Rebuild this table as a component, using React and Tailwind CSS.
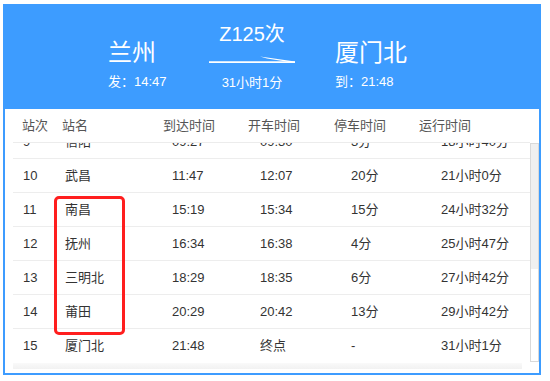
const rows = [
  ["9", "信阳", "09:27", "09:30", "3分", "18小时40分"],
  ["10", "武昌", "11:47", "12:07", "20分", "21小时0分"],
  ["11", "南昌", "15:19", "15:34", "15分", "24小时32分"],
  ["12", "抚州", "16:34", "16:38", "4分", "25小时47分"],
  ["13", "三明北", "18:29", "18:35", "6分", "27小时42分"],
  ["14", "莆田", "20:29", "20:42", "13分", "29小时42分"],
  ["15", "厦门北", "21:48", "终点", "-", "31小时1分"],
];

const heads = ["站次", "站名", "到达时间", "开车时间", "停车时间", "运行时间"];

function Arrow() {
  return (
    <svg width="86" height="8" viewBox="0 0 86 8" className="block">
      <path d="M0 5.2 H86 V7 H0 Z" fill="#fff" />
      <path d="M51 0.6 L86 5.4 L86 7 L58 2.6 Z" fill="#fff" />
    </svg>
  );
}

export default function App() {
  return (
    <div
      className="min-h-screen bg-white pl-[3px] pt-[4px]"
      style={{ fontFamily: '"Liberation Sans", "Noto Sans CJK SC", sans-serif' }}
    >
      <div className="relative flex h-[371px] w-[538px] flex-col border-2 border-[#3d9cff] bg-white">
        {/* route header */}
        <div className="flex h-[103px] bg-[#3d9cff] pl-[103px] text-white">
          <div className="w-[101px] pt-[32px]">
            <div className="text-[24px] leading-[30px]">兰州</div>
            <div className="mt-[5px] text-[13px] leading-[18px]">发：14:47</div>
          </div>
          <div className="flex w-[86px] flex-col items-center pt-[16px]">
            <div className="text-[20px] leading-[24px]">Z125次</div>
            <div className="mt-[10px]">
              <Arrow />
            </div>
            <div className="mt-[10px] text-[13px] leading-[18px]">31小时1分</div>
          </div>
          <div className="ml-[40px] pt-[32px]">
            <div className="text-[24px] leading-[30px]">厦门北</div>
            <div className="mt-[5px] text-[13px] leading-[18px]">到：21:48</div>
          </div>
        </div>

        {/* column titles */}
        <div className="ml-[8px] grid h-[34px] w-[517px] grid-cols-[40px_101px_85px_86px_85px_1fr] items-center border-b border-[#ececec] pl-[9px] text-[13px] text-[#555]">
          {heads.map((h) => (
            <span key={h}>{h}</span>
          ))}
        </div>

        {/* stops */}
        <div className="flex">
          <div className="ml-[8px] h-[220px] w-[517px] shrink-0 overflow-hidden">
            <div className="-mt-[18px]">
              {rows.map((r, i) => (
                <div
                  key={r[0]}
                  className={`grid h-[34px] grid-cols-[42px_107px_88px_91px_90px_1fr] items-center pl-[10px] text-[13px] text-[#333] ${
                    i < rows.length - 1 ? "border-b border-[#ededed]" : ""
                  }`}
                >
                  {r.map((c, j) => (
                    <span key={j}>{c}</span>
                  ))}
                </div>
              ))}
            </div>
          </div>
          <div className="flex h-[219px] w-[9px] shrink-0 flex-col border border-[#d9d9d9] bg-white">
            <div className="h-[125px] bg-[#f0f0f0]" />
          </div>
        </div>
        <div className="ml-[8px] h-[6px] w-[509px] bg-gradient-to-b from-[#f7f7f7] to-[#ececec] opacity-70" />

        {/* highlight */}
        <div className="absolute left-[49px] top-[190px] h-[139px] w-[71px] rounded-[5px] border-[3px] border-[#ff1e1e]" />
      </div>
    </div>
  );
}
